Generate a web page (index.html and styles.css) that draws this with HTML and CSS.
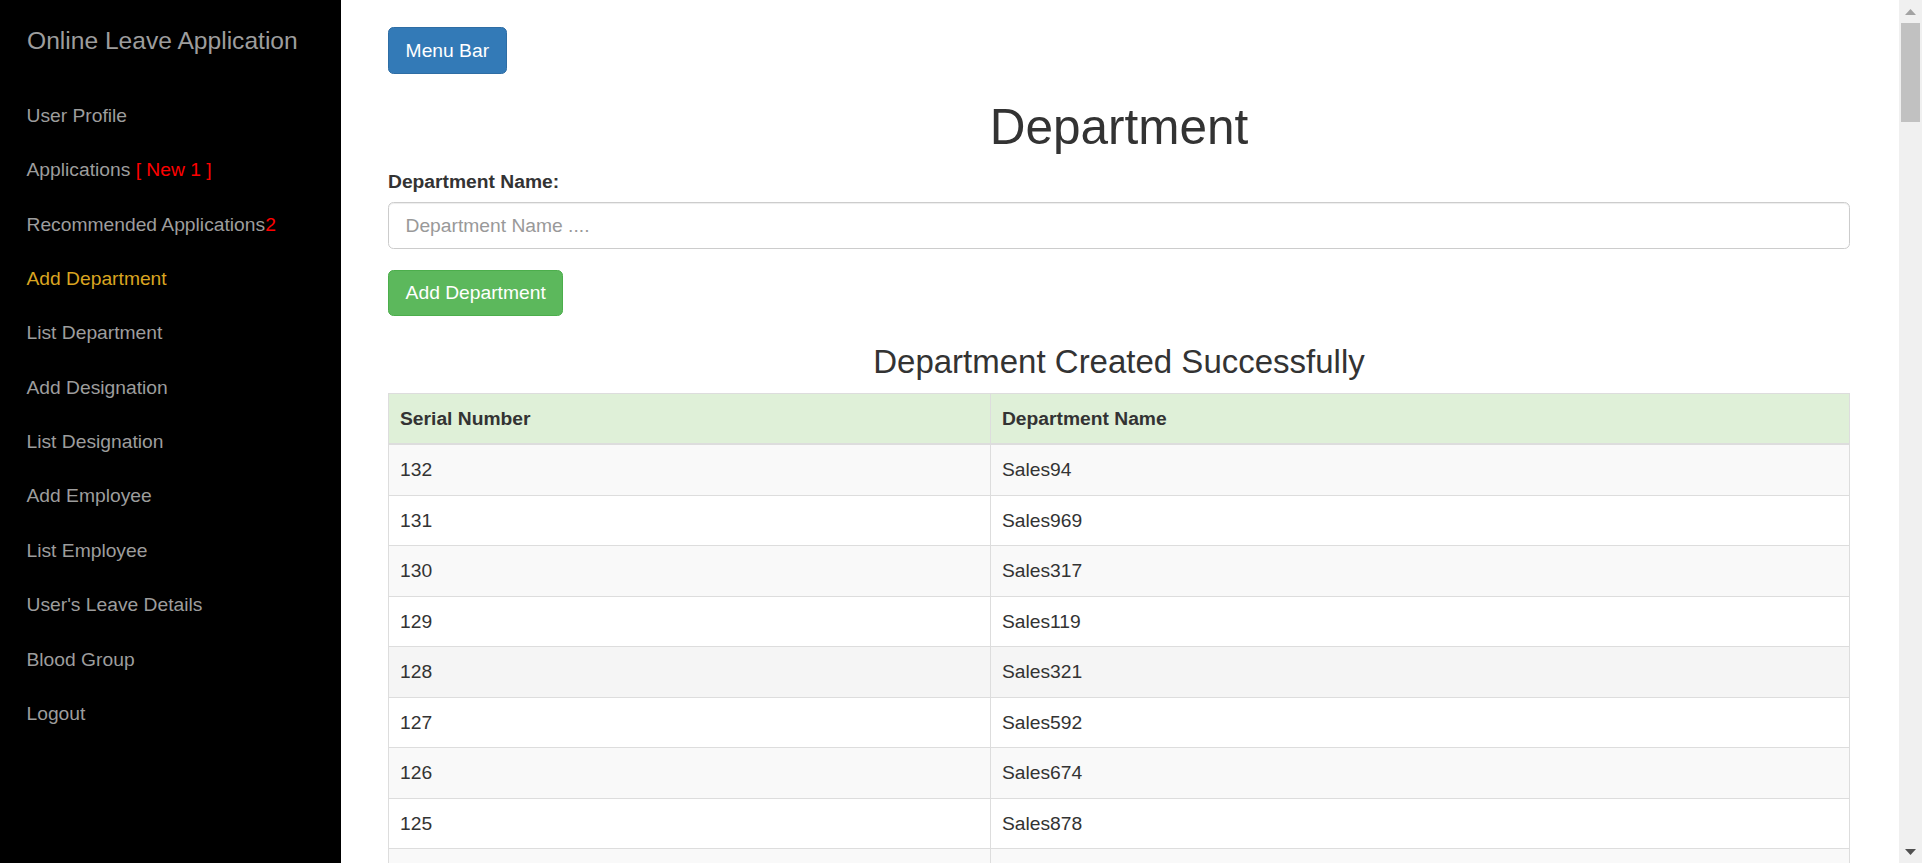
FILE: index.html
```html
<!DOCTYPE html>
<html lang="en">
<head>
<meta charset="utf-8">
<title>Department</title>
<link rel="stylesheet" href="styles.css">
</head>
<body>
<aside class="sidebar">
  <div class="brand">Online Leave Application</div>
  <nav class="nav">
    <a href="#">User Profile</a>
    <a href="#">Applications <span class="alert">[ New 1 ]</span></a>
    <a href="#">Recommended Applications<span class="alert">2</span></a>
    <a href="#" class="active">Add Department</a>
    <a href="#">List Department</a>
    <a href="#">Add Designation</a>
    <a href="#">List Designation</a>
    <a href="#">Add Employee</a>
    <a href="#">List Employee</a>
    <a href="#">User's Leave Details</a>
    <a href="#">Blood Group</a>
    <a href="#">Logout</a>
  </nav>
</aside>
<main class="main">
  <div class="topbar"><button class="btn btn-primary">Menu Bar</button></div>
  <h1 class="page-title">Department</h1>
  <form class="form">
    <label class="label" for="dept">Department Name:</label>
    <input class="input" id="dept" type="text" placeholder="Department Name ....">
    <div class="actions"><button type="button" class="btn btn-success">Add Department</button></div>
  </form>
  <h3 class="message">Department Created Successfully</h3>
  <table class="table">
    <colgroup><col class="col-serial"><col></colgroup>
    <thead>
      <tr><th>Serial Number</th><th>Department Name</th></tr>
    </thead>
    <tbody>
      <tr><td>132</td><td>Sales94</td></tr>
      <tr><td>131</td><td>Sales969</td></tr>
      <tr><td>130</td><td>Sales317</td></tr>
      <tr><td>129</td><td>Sales119</td></tr>
      <tr class="hover"><td>128</td><td>Sales321</td></tr>
      <tr><td>127</td><td>Sales592</td></tr>
      <tr><td>126</td><td>Sales674</td></tr>
      <tr><td>125</td><td>Sales878</td></tr>
      <tr class="empty-row"><td></td><td></td></tr>
    </tbody>
  </table>
</main>
<div class="scrollbar">
  <div class="sb-btn">
    <svg width="11" height="6" viewBox="0 0 11 6"><path d="M0 6 L5.5 0 L11 6 Z" fill="#a3a3a3"/></svg>
  </div>
  <div class="sb-thumb"></div>
  <div class="sb-track"></div>
  <div class="sb-btn">
    <svg width="11" height="6" viewBox="0 0 11 6"><path d="M0 0 L11 0 L5.5 6 Z" fill="#505050"/></svg>
  </div>
</div>
</body>
</html>
```

FILE: styles.css
```css
html, body {
  margin: 0;
  padding: 0;
}
body {
  display: flex;
  height: 863px;
  overflow: hidden;
  font-family: "Liberation Sans", Arial, Helvetica, sans-serif;
  font-size: 19.25px;
  line-height: 27.5px;
  color: #333;
  background: #fff;
}
.sidebar {
  width: 341px;
  flex: none;
  background: #000;
  padding-top: 26.4px;
  box-sizing: border-box;
}
.brand {
  font-size: 24.6px;
  line-height: 30px;
  color: #9d9d9d;
  padding-left: 27px;
  margin-bottom: 32px;
}
.nav a {
  display: block;
  padding: 13.45px 0 13.45px 26.5px;
  font-size: 19.25px;
  line-height: 27.5px;
  color: #9d9d9d;
  text-decoration: none;
}
.nav a.active {
  color: #daa520;
}
.nav .alert {
  color: #ff0000;
}
.main {
  flex: 1;
  min-width: 0;
  padding: 27px 49px 0 47px;
  box-sizing: border-box;
}
.topbar {
  display: flex;
}
.btn {
  font-family: inherit;
  font-size: 19.25px;
  line-height: 27.5px;
  padding: 8.6px 16.6px;
  border: 1px solid transparent;
  border-radius: 5.5px;
  color: #fff;
  cursor: pointer;
}
.btn-primary {
  background: #337ab7;
  border-color: #2e6da4;
}
.btn-success {
  background: #5cb85c;
  border-color: #4cae4c;
}
.page-title {
  font-size: 49.5px;
  line-height: 1.1;
  font-weight: 500;
  text-align: center;
  margin: 25.9px 0 13.75px;
}
.form {
  margin: 0;
}
.label {
  display: block;
  font-weight: bold;
  margin-bottom: 6.9px;
}
.input {
  display: block;
  width: 100%;
  height: 46.75px;
  box-sizing: border-box;
  padding: 8.25px 16.5px;
  font-family: inherit;
  font-size: 19.25px;
  line-height: 27.5px;
  color: #555;
  border: 1px solid #ccc;
  border-radius: 5.5px;
  box-shadow: inset 0 1px 1px rgba(0, 0, 0, .075);
  margin: 0 0 20.6px;
}
.input::placeholder {
  color: #999;
}
.actions {
  display: flex;
}
.message {
  font-size: 33px;
  line-height: 1.1;
  font-weight: 500;
  text-align: center;
  margin: 27.5px 0 12.6px;
}
.table {
  width: 100%;
  border-collapse: collapse;
  border-spacing: 0;
}
.col-serial {
  width: 41.2%;
}
.table th,
.table td {
  padding: 11px;
  text-align: left;
  border: 1px solid #ddd;
  vertical-align: top;
}
.table thead th {
  background: #dff0d8;
  font-weight: bold;
  border-bottom-width: 2px;
}
.table tbody tr:nth-child(odd) {
  background: #f9f9f9;
}
.table tbody tr.hover {
  background: #f5f5f5;
}
.table tbody tr.empty-row td {
  height: 27.5px;
}
.scrollbar {
  width: 23px;
  flex: none;
  background: #f0f0f0;
  display: flex;
  flex-direction: column;
  align-items: center;
}
.sb-btn {
  height: 23px;
  width: 23px;
  display: flex;
  align-items: center;
  justify-content: center;
  flex: none;
}
.sb-thumb {
  width: 19px;
  height: 99px;
  background: #c1c1c1;
  flex: none;
}
.sb-track {
  flex: 1;
}
```
